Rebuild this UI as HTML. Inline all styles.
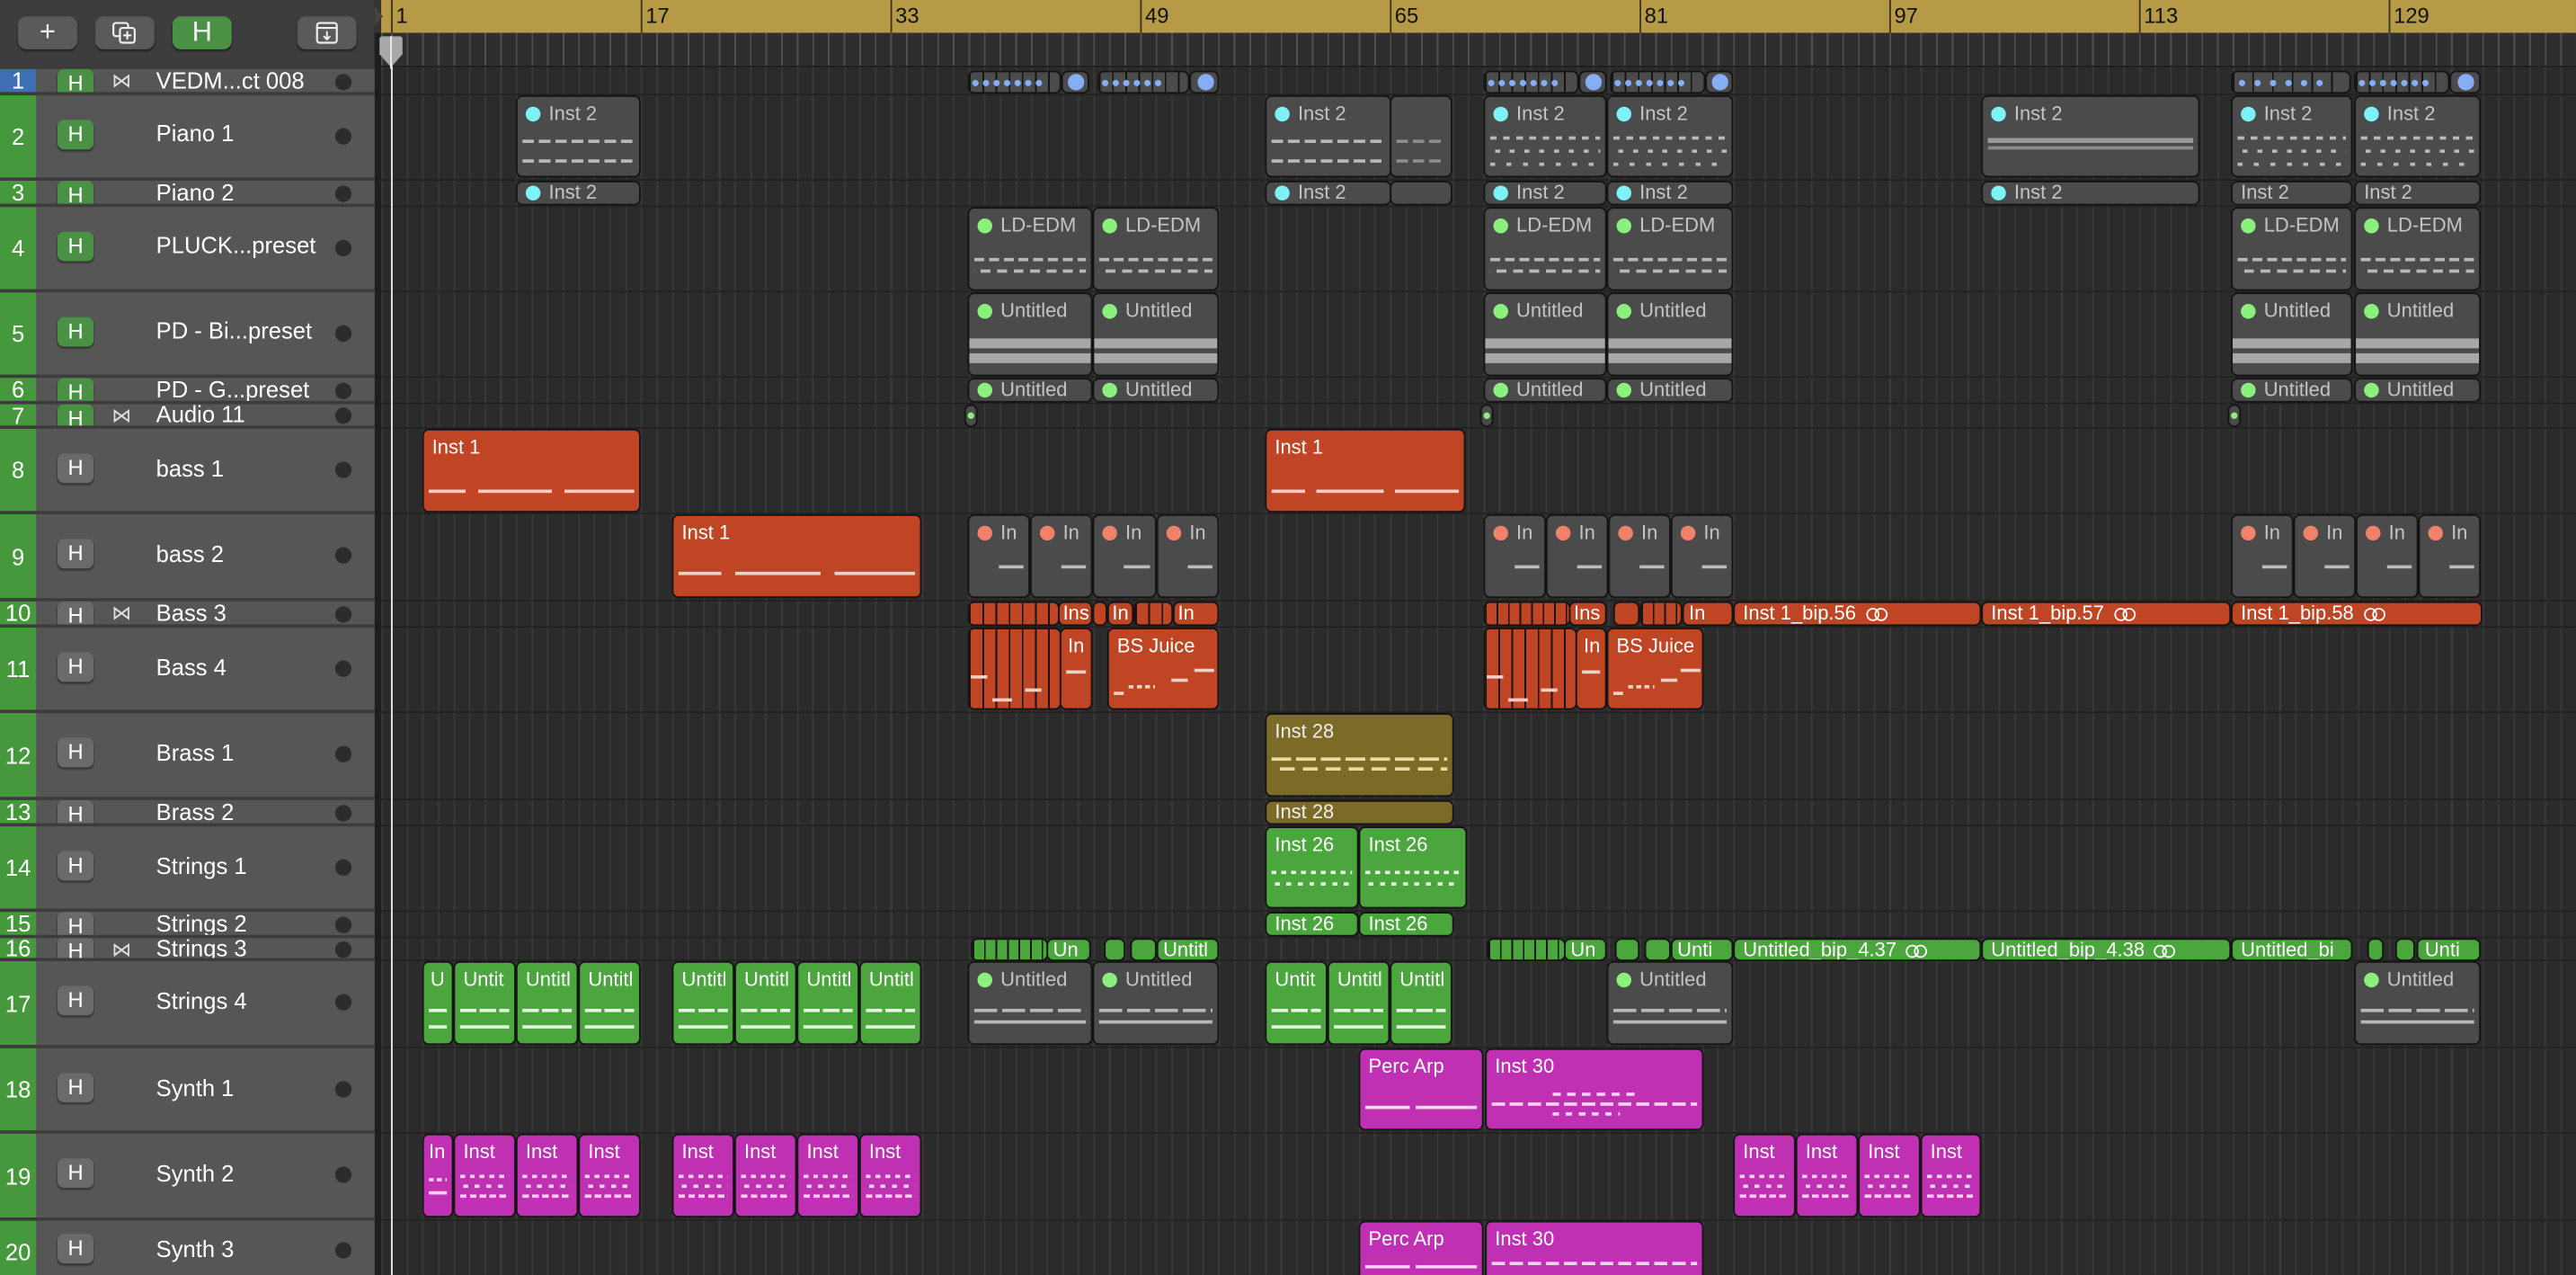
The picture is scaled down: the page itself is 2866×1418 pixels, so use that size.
<!DOCTYPE html>
<html><head><meta charset="utf-8"><style>
html,body{margin:0;padding:0;width:2866px;height:1418px;overflow:hidden;background:#2a2a2a;font-family:"Liberation Sans",sans-serif}
#s{position:absolute;left:0;top:0;width:1568px;height:776px;transform:scale(1.8278,1.8273);transform-origin:0 0;overflow:hidden;background:#2a2a2a}
.a{position:absolute}
#tb{left:0;top:0;width:228px;height:41px;background:#3d3d3d}
.btn{position:absolute;top:10px;width:36px;height:20px;border-radius:5px;background:#5a5a5a;color:#eee;font-size:17px;text-align:center;line-height:20px;box-shadow:0 1px 1px #222}
#ruler{left:232px;top:0;width:1336px;height:20px;background:#b69a45}
.bn{position:absolute;top:0;height:20px;border-left:1px solid #3b3320;font-size:13px;color:#111;padding-left:2px;line-height:19px}
#ticks{left:232px;top:20px;width:1336px;height:21px;background:#2e2e2e repeating-linear-gradient(90deg,#505050 0 1px,transparent 1px 9.5px);background-position:6px 0;border-bottom:1px solid #1e1e1e;box-sizing:border-box}
#grid{left:232px;top:41px;width:1336px;height:735px;background:#2b2b2b repeating-linear-gradient(90deg,#3a3a3a 0 1px,transparent 1px 9.5px);background-position:6px 0}
#lp{left:0;top:41px;width:228px;height:735px;background:#3a3a3a}
#gap{left:228px;top:0;width:4px;height:776px;background:#1e1e1e}
.row{position:absolute;left:0;width:228px;background:#565656;overflow:hidden;border-bottom:2px solid #3c3c3c;box-sizing:border-box}
.num{position:absolute;left:0;top:0;bottom:0;width:22px;background:#46983c;color:#fff;font-size:14px;text-align:center;display:flex;align-items:center;justify-content:center}
.h{position:absolute;left:35px;width:22px;height:18px;border-radius:4px;background:#6a6a6a;color:#fff;font-size:13px;text-align:center;line-height:18px;box-shadow:0 1px 1px #333}
.h.gr{background:#4a9146}
.ic{position:absolute;left:64px;width:20px;height:14px;color:#ddd;font-size:12px;text-align:center;line-height:14px}
.nm{position:absolute;left:95px;color:#fff;font-size:14px;white-space:nowrap}
.dt{position:absolute;left:204px;width:10px;height:10px;border-radius:50%;background:#2c2c2c}
.sep{position:absolute;left:232px;width:1336px;height:1px;background:#222}
.r{position:absolute;box-sizing:border-box;border:1px solid #141414;border-radius:4px;overflow:hidden;font-size:12px;color:#fff;padding-left:5px;padding-top:3px;line-height:15px;white-space:nowrap}
.r[style*="height:15px"],.r[style*="height:14px"]{padding-top:0}
.g{background:#4b4b4b;color:#c4c4c4}
.o{background:#bf4525}
.gn{background:#4aa63d}
.m{background:#c030b2}
.ol{background:#7c6a27;color:#eee}
.d{display:inline-block;width:9px;height:9px;border-radius:50%;margin-right:5px;vertical-align:-1px}
.cy{background:#7ef3f7}.lg{background:#8af27c}.or{background:#f0826a}.bl{background:#86aef5}
.n{position:absolute;left:3px;right:3px;height:2px}
.ng{background:repeating-linear-gradient(90deg,#b8b8b8 0 7px,transparent 7px 10px)}
.nw{background:repeating-linear-gradient(90deg,rgba(255,255,255,.85) 0 10px,transparent 10px 14px)}
.thick{background:#a8a8a8;height:6px}
.lp{display:inline-block;width:6px;height:6px;border:1px solid #fff;border-radius:50%;margin-left:6px;vertical-align:-1px}
.lp+.lp{margin-left:-3px}
.au{padding:0 !important;background:#4b4b4b repeating-linear-gradient(90deg,#141414 0 1px,transparent 1px 8px)}
.au span{position:absolute;top:-1px;left:1px;color:#86aef5;font-size:9px;letter-spacing:1px;line-height:14px}
</style></head><body><div id="s">
<div class="a" id="tb">
 <div class="btn" style="left:11px">+</div>
 <div class="btn" style="left:58px"><svg width="16" height="14" viewBox="0 0 16 14" style="margin-top:3px"><rect x="1" y="1" width="9" height="8" rx="1.5" fill="none" stroke="#eee" stroke-width="1.2"/><rect x="5" y="4" width="9" height="9" rx="1.5" fill="#5a5a5a" stroke="#eee" stroke-width="1.2"/><path d="M9.5 6v5M7 8.5h5" stroke="#eee" stroke-width="1.2"/></svg></div>
 <div class="btn" style="left:105px;background:#4a9146">H</div>
 <div class="btn" style="left:181px"><svg width="16" height="15" viewBox="0 0 16 15" style="margin-top:3px"><rect x="2" y="1" width="12" height="12" rx="1.5" fill="none" stroke="#eee" stroke-width="1.2"/><path d="M2 4h12M8 6v5M6 9l2 2 2-2" fill="none" stroke="#eee" stroke-width="1.1"/></svg></div>
</div>
<div class="a" id="gap"></div>
<div class="a" style="left:228px;top:0;width:10px;height:20px;background:#333"></div>
<div class="a" id="ruler">
 <div class="bn" style="left:6px">1</div><div class="bn" style="left:158px">17</div><div class="bn" style="left:310px">33</div><div class="bn" style="left:462px">49</div><div class="bn" style="left:614px">65</div><div class="bn" style="left:766px">81</div><div class="bn" style="left:918px">97</div><div class="bn" style="left:1070px">113</div><div class="bn" style="left:1222px">129</div>
</div>
<div class="a" id="ticks"></div>
<div class="a" id="grid"></div>
<div class="a" id="lp"></div>

<div class="sep" style="top:57px"></div><div class="sep" style="top:109px"></div><div class="sep" style="top:125px"></div><div class="sep" style="top:177px"></div><div class="sep" style="top:229px"></div><div class="sep" style="top:245px"></div><div class="sep" style="top:260px"></div><div class="sep" style="top:312px"></div><div class="sep" style="top:365px"></div><div class="sep" style="top:381px"></div><div class="sep" style="top:433px"></div><div class="sep" style="top:486px"></div><div class="sep" style="top:502px"></div><div class="sep" style="top:554px"></div><div class="sep" style="top:570px"></div><div class="sep" style="top:584px"></div><div class="sep" style="top:637px"></div><div class="sep" style="top:689px"></div><div class="sep" style="top:742px"></div>

<div class="row" style="top:42px;height:16px"><div class="num" style="background:#3e6fb3">1</div><div class="h gr" style="top:0">H</div><div class="ic" style="top:0">⋈</div><div class="nm" style="top:-1px">VEDM...ct 008</div><div class="dt" style="top:3px"></div></div>
<div class="row" style="top:58px;height:52px"><div class="num">2</div><div class="h gr" style="top:15px">H</div><div class="nm" style="top:15px">Piano 1</div><div class="dt" style="top:20px"></div></div>
<div class="row" style="top:110px;height:16px"><div class="num">3</div><div class="h gr" style="top:0">H</div><div class="nm" style="top:-1px">Piano 2</div><div class="dt" style="top:3px"></div></div>
<div class="row" style="top:126px;height:52px"><div class="num">4</div><div class="h gr" style="top:15px">H</div><div class="nm" style="top:15px">PLUCK...preset</div><div class="dt" style="top:20px"></div></div>
<div class="row" style="top:178px;height:52px"><div class="num">5</div><div class="h gr" style="top:15px">H</div><div class="nm" style="top:15px">PD - Bi...preset</div><div class="dt" style="top:20px"></div></div>
<div class="row" style="top:230px;height:16px"><div class="num">6</div><div class="h gr" style="top:0">H</div><div class="nm" style="top:-1px">PD - G...preset</div><div class="dt" style="top:3px"></div></div>
<div class="row" style="top:246px;height:15px"><div class="num">7</div><div class="h gr" style="top:0">H</div><div class="ic" style="top:0">⋈</div><div class="nm" style="top:-2px">Audio 11</div><div class="dt" style="top:2px"></div></div>
<div class="row" style="top:261px;height:52px"><div class="num">8</div><div class="h" style="top:15px">H</div><div class="nm" style="top:16px">bass 1</div><div class="dt" style="top:20px"></div></div>
<div class="row" style="top:313px;height:53px"><div class="num">9</div><div class="h" style="top:15px">H</div><div class="nm" style="top:16px">bass 2</div><div class="dt" style="top:20px"></div></div>
<div class="row" style="top:366px;height:16px"><div class="num">10</div><div class="h" style="top:0">H</div><div class="ic" style="top:0">⋈</div><div class="nm" style="top:-1px">Bass 3</div><div class="dt" style="top:3px"></div></div>
<div class="row" style="top:382px;height:52px"><div class="num">11</div><div class="h" style="top:15px">H</div><div class="nm" style="top:16px">Bass 4</div><div class="dt" style="top:20px"></div></div>
<div class="row" style="top:434px;height:53px"><div class="num">12</div><div class="h" style="top:15px">H</div><div class="nm" style="top:16px">Brass 1</div><div class="dt" style="top:20px"></div></div>
<div class="row" style="top:487px;height:16px"><div class="num">13</div><div class="h" style="top:0">H</div><div class="nm" style="top:-1px">Brass 2</div><div class="dt" style="top:3px"></div></div>
<div class="row" style="top:503px;height:52px"><div class="num">14</div><div class="h" style="top:15px">H</div><div class="nm" style="top:16px">Strings 1</div><div class="dt" style="top:20px"></div></div>
<div class="row" style="top:555px;height:16px"><div class="num">15</div><div class="h" style="top:0">H</div><div class="nm" style="top:-1px">Strings 2</div><div class="dt" style="top:3px"></div></div>
<div class="row" style="top:571px;height:14px"><div class="num">16</div><div class="h" style="top:-1px">H</div><div class="ic" style="top:0">⋈</div><div class="nm" style="top:-2px">Strings 3</div><div class="dt" style="top:2px"></div></div>
<div class="row" style="top:585px;height:53px"><div class="num">17</div><div class="h" style="top:15px">H</div><div class="nm" style="top:16px">Strings 4</div><div class="dt" style="top:20px"></div></div>
<div class="row" style="top:638px;height:52px"><div class="num">18</div><div class="h" style="top:15px">H</div><div class="nm" style="top:16px">Synth 1</div><div class="dt" style="top:20px"></div></div>
<div class="row" style="top:690px;height:53px"><div class="num">19</div><div class="h" style="top:15px">H</div><div class="nm" style="top:16px">Synth 2</div><div class="dt" style="top:20px"></div></div>
<div class="row" style="top:743px;height:40px"><div class="num">20</div><div class="h" style="top:8px">H</div><div class="nm" style="top:9px">Synth 3</div><div class="dt" style="top:13px"></div></div>

<!-- Row 1 audio cells -->
<div class="r g au" style="left:589px;top:43px;width:57px;height:14px"><span>●●●●●●●</span></div>
<div class="r g" style="left:646px;top:43px;width:17px;height:14px;padding:0"><span class="d bl" style="position:absolute;left:3px;top:1px;width:10px;height:10px"></span></div>
<div class="r g au" style="left:668px;top:43px;width:56px;height:14px"><span>●●●●●●</span></div>
<div class="r g" style="left:724px;top:43px;width:18px;height:14px;padding:0"><span class="d bl" style="position:absolute;left:4px;top:1px;width:10px;height:10px"></span></div>
<div class="r g au" style="left:903px;top:43px;width:58px;height:14px"><span>●●●●●●●</span></div>
<div class="r g" style="left:961px;top:43px;width:17px;height:14px;padding:0"><span class="d bl" style="position:absolute;left:3px;top:1px;width:10px;height:10px"></span></div>
<div class="r g au" style="left:980px;top:43px;width:58px;height:14px"><span>●●●●●●●</span></div>
<div class="r g" style="left:1038px;top:43px;width:17px;height:14px;padding:0"><span class="d bl" style="position:absolute;left:3px;top:1px;width:10px;height:10px"></span></div>
<div class="r g au" style="left:1358px;top:43px;width:73px;height:14px;background:#4b4b4b repeating-linear-gradient(90deg,#141414 0 1px,transparent 1px 12px)"><span style="letter-spacing:4px;left:3px">●●●●●●</span></div>
<div class="r g au" style="left:1433px;top:43px;width:58px;height:14px"><span>●●●●●●●</span></div>
<div class="r g" style="left:1491px;top:43px;width:19px;height:14px;padding:0"><span class="d bl" style="position:absolute;left:4px;top:1px;width:10px;height:10px"></span></div>

<!-- Row 2 Inst 2 -->
<div class="r g" style="left:314px;top:58px;width:76px;height:50px"><span class="d cy"></span>Inst 2<div class="n ng" style="top:26px"></div><div class="n ng" style="top:38px"></div></div>
<div class="r g" style="left:770px;top:58px;width:77px;height:50px"><span class="d cy"></span>Inst 2<div class="n ng" style="top:26px"></div><div class="n ng" style="top:38px"></div></div>
<div class="r g" style="left:846px;top:58px;width:38px;height:50px"><div class="n ng" style="top:26px;opacity:.6"></div><div class="n ng" style="top:38px;opacity:.6"></div></div>
<div class="r g" style="left:903px;top:58px;width:75px;height:50px"><span class="d cy"></span>Inst 2<div class="n ng" style="top:24px;background:repeating-linear-gradient(90deg,#b8b8b8 0 4px,transparent 4px 8px)"></div><div class="n ng" style="top:32px;background:repeating-linear-gradient(90deg,transparent 0 3px,#b8b8b8 3px 6px,transparent 6px 9px)"></div><div class="n ng" style="top:40px;background:repeating-linear-gradient(90deg,#b8b8b8 0 3px,transparent 3px 10px)"></div></div>
<div class="r g" style="left:978px;top:58px;width:77px;height:50px"><span class="d cy"></span>Inst 2<div class="n ng" style="top:24px;background:repeating-linear-gradient(90deg,#b8b8b8 0 4px,transparent 4px 8px)"></div><div class="n ng" style="top:32px;background:repeating-linear-gradient(90deg,transparent 0 3px,#b8b8b8 3px 6px,transparent 6px 9px)"></div><div class="n ng" style="top:40px;background:repeating-linear-gradient(90deg,#b8b8b8 0 3px,transparent 3px 10px)"></div></div>
<div class="r g" style="left:1206px;top:58px;width:133px;height:50px"><span class="d cy"></span>Inst 2<div class="n" style="top:25px;background:#9a9a9a;height:3px"></div><div class="n" style="top:30px;background:#8a8a8a;height:2px"></div></div>
<div class="r g" style="left:1358px;top:58px;width:74px;height:50px"><span class="d cy"></span>Inst 2<div class="n ng" style="top:24px;background:repeating-linear-gradient(90deg,#b8b8b8 0 4px,transparent 4px 8px)"></div><div class="n ng" style="top:32px;background:repeating-linear-gradient(90deg,transparent 0 3px,#b8b8b8 3px 6px,transparent 6px 9px)"></div><div class="n ng" style="top:40px;background:repeating-linear-gradient(90deg,#b8b8b8 0 3px,transparent 3px 10px)"></div></div>
<div class="r g" style="left:1433px;top:58px;width:77px;height:50px"><span class="d cy"></span>Inst 2<div class="n ng" style="top:24px;background:repeating-linear-gradient(90deg,#b8b8b8 0 4px,transparent 4px 8px)"></div><div class="n ng" style="top:32px;background:repeating-linear-gradient(90deg,transparent 0 3px,#b8b8b8 3px 6px,transparent 6px 9px)"></div><div class="n ng" style="top:40px;background:repeating-linear-gradient(90deg,#b8b8b8 0 3px,transparent 3px 10px)"></div></div>

<!-- Row 3 -->
<div class="r g" style="left:314px;top:110px;width:76px;height:15px;line-height:13px"><span class="d cy"></span>Inst 2</div>
<div class="r g" style="left:770px;top:110px;width:77px;height:15px;line-height:13px"><span class="d cy"></span>Inst 2</div>
<div class="r g" style="left:846px;top:110px;width:38px;height:15px"></div>
<div class="r g" style="left:903px;top:110px;width:75px;height:15px;line-height:13px"><span class="d cy"></span>Inst 2</div>
<div class="r g" style="left:978px;top:110px;width:77px;height:15px;line-height:13px"><span class="d cy"></span>Inst 2</div>
<div class="r g" style="left:1206px;top:110px;width:133px;height:15px;line-height:13px"><span class="d cy"></span>Inst 2</div>
<div class="r g" style="left:1358px;top:110px;width:74px;height:15px;line-height:13px">Inst 2</div>
<div class="r g" style="left:1433px;top:110px;width:77px;height:15px;line-height:13px">Inst 2</div>

<!-- Row 4 LD-EDM -->
<div class="r g" style="left:589px;top:126px;width:76px;height:51px"><span class="d lg"></span>LD-EDM<div class="n ng" style="top:30px;background:repeating-linear-gradient(90deg,#b8b8b8 0 6px,transparent 6px 9px)"></div><div class="n ng" style="top:37px;background:repeating-linear-gradient(90deg,transparent 0 4px,#b8b8b8 4px 10px)"></div></div>
<div class="r g" style="left:665px;top:126px;width:77px;height:51px"><span class="d lg"></span>LD-EDM<div class="n ng" style="top:30px;background:repeating-linear-gradient(90deg,#b8b8b8 0 6px,transparent 6px 9px)"></div><div class="n ng" style="top:37px;background:repeating-linear-gradient(90deg,transparent 0 4px,#b8b8b8 4px 10px)"></div></div>
<div class="r g" style="left:903px;top:126px;width:75px;height:51px"><span class="d lg"></span>LD-EDM<div class="n ng" style="top:30px;background:repeating-linear-gradient(90deg,#b8b8b8 0 6px,transparent 6px 9px)"></div><div class="n ng" style="top:37px;background:repeating-linear-gradient(90deg,transparent 0 4px,#b8b8b8 4px 10px)"></div></div>
<div class="r g" style="left:978px;top:126px;width:77px;height:51px"><span class="d lg"></span>LD-EDM<div class="n ng" style="top:30px;background:repeating-linear-gradient(90deg,#b8b8b8 0 6px,transparent 6px 9px)"></div><div class="n ng" style="top:37px;background:repeating-linear-gradient(90deg,transparent 0 4px,#b8b8b8 4px 10px)"></div></div>
<div class="r g" style="left:1358px;top:126px;width:74px;height:51px"><span class="d lg"></span>LD-EDM<div class="n ng" style="top:30px;background:repeating-linear-gradient(90deg,#b8b8b8 0 6px,transparent 6px 9px)"></div><div class="n ng" style="top:37px;background:repeating-linear-gradient(90deg,transparent 0 4px,#b8b8b8 4px 10px)"></div></div>
<div class="r g" style="left:1433px;top:126px;width:77px;height:51px"><span class="d lg"></span>LD-EDM<div class="n ng" style="top:30px;background:repeating-linear-gradient(90deg,#b8b8b8 0 6px,transparent 6px 9px)"></div><div class="n ng" style="top:37px;background:repeating-linear-gradient(90deg,transparent 0 4px,#b8b8b8 4px 10px)"></div></div>

<!-- Row 5 -->
<div class="r g" style="left:589px;top:178px;width:76px;height:51px"><span class="d lg"></span>Untitled<div class="n thick" style="top:27px;left:0;right:0"></div><div class="n thick" style="top:36px;left:0;right:0"></div></div>
<div class="r g" style="left:665px;top:178px;width:77px;height:51px"><span class="d lg"></span>Untitled<div class="n thick" style="top:27px;left:0;right:0"></div><div class="n thick" style="top:36px;left:0;right:0"></div></div>
<div class="r g" style="left:903px;top:178px;width:75px;height:51px"><span class="d lg"></span>Untitled<div class="n thick" style="top:27px;left:0;right:0"></div><div class="n thick" style="top:36px;left:0;right:0"></div></div>
<div class="r g" style="left:978px;top:178px;width:77px;height:51px"><span class="d lg"></span>Untitled<div class="n thick" style="top:27px;left:0;right:0"></div><div class="n thick" style="top:36px;left:0;right:0"></div></div>
<div class="r g" style="left:1358px;top:178px;width:74px;height:51px"><span class="d lg"></span>Untitled<div class="n thick" style="top:27px;left:0;right:0"></div><div class="n thick" style="top:36px;left:0;right:0"></div></div>
<div class="r g" style="left:1433px;top:178px;width:77px;height:51px"><span class="d lg"></span>Untitled<div class="n thick" style="top:27px;left:0;right:0"></div><div class="n thick" style="top:36px;left:0;right:0"></div></div>

<!-- Row 6 -->
<div class="r g" style="left:589px;top:230px;width:76px;height:15px;line-height:13px"><span class="d lg"></span>Untitled</div>
<div class="r g" style="left:665px;top:230px;width:77px;height:15px;line-height:13px"><span class="d lg"></span>Untitled</div>
<div class="r g" style="left:903px;top:230px;width:75px;height:15px;line-height:13px"><span class="d lg"></span>Untitled</div>
<div class="r g" style="left:978px;top:230px;width:77px;height:15px;line-height:13px"><span class="d lg"></span>Untitled</div>
<div class="r g" style="left:1358px;top:230px;width:74px;height:15px;line-height:13px"><span class="d lg"></span>Untitled</div>
<div class="r g" style="left:1433px;top:230px;width:77px;height:15px;line-height:13px"><span class="d lg"></span>Untitled</div>

<!-- Row 7 -->
<div class="r g" style="left:587px;top:246px;width:8px;height:14px;padding:0"><span class="d lg" style="width:4px;height:4px;margin:4px 0 0 1px;display:block"></span></div>
<div class="r g" style="left:901px;top:246px;width:8px;height:14px;padding:0"><span class="d lg" style="width:4px;height:4px;margin:4px 0 0 1px;display:block"></span></div>
<div class="r g" style="left:1356px;top:246px;width:8px;height:14px;padding:0"><span class="d lg" style="width:4px;height:4px;margin:4px 0 0 1px;display:block"></span></div>

<!-- Row 8 -->
<div class="r o" style="left:257px;top:261px;width:133px;height:51px">Inst 1<div class="n nw" style="top:36px;background:linear-gradient(90deg,#f3d0c6 0 18%,transparent 18% 24%,#f3d0c6 24% 60%,transparent 60% 66%,#f3d0c6 66% 100%)"></div></div>
<div class="r o" style="left:770px;top:261px;width:122px;height:51px">Inst 1<div class="n nw" style="top:36px;background:linear-gradient(90deg,#f3d0c6 0 18%,transparent 18% 24%,#f3d0c6 24% 60%,transparent 60% 66%,#f3d0c6 66% 100%)"></div></div>

<!-- Row 9 -->
<div class="r o" style="left:409px;top:313px;width:152px;height:51px">Inst 1<div class="n" style="top:34px;background:linear-gradient(90deg,#f3d0c6 0 18%,transparent 18% 24%,#f3d0c6 24% 60%,transparent 60% 66%,#f3d0c6 66% 100%)"></div></div>
<div class="r g" style="left:589px;top:313px;width:38px;height:51px"><span class="d or"></span>In<div class="n" style="top:30px;background:#bbb;left:18px"></div></div>
<div class="r g" style="left:627px;top:313px;width:38px;height:51px"><span class="d or"></span>In<div class="n" style="top:30px;background:#bbb;left:18px"></div></div>
<div class="r g" style="left:665px;top:313px;width:39px;height:51px"><span class="d or"></span>In<div class="n" style="top:30px;background:#bbb;left:18px"></div></div>
<div class="r g" style="left:704px;top:313px;width:38px;height:51px"><span class="d or"></span>In<div class="n" style="top:30px;background:#bbb;left:18px"></div></div>
<div class="r g" style="left:903px;top:313px;width:38px;height:51px"><span class="d or"></span>In<div class="n" style="top:30px;background:#bbb;left:18px"></div></div>
<div class="r g" style="left:941px;top:313px;width:38px;height:51px"><span class="d or"></span>In<div class="n" style="top:30px;background:#bbb;left:18px"></div></div>
<div class="r g" style="left:979px;top:313px;width:38px;height:51px"><span class="d or"></span>In<div class="n" style="top:30px;background:#bbb;left:18px"></div></div>
<div class="r g" style="left:1017px;top:313px;width:38px;height:51px"><span class="d or"></span>In<div class="n" style="top:30px;background:#bbb;left:18px"></div></div>
<div class="r g" style="left:1358px;top:313px;width:38px;height:51px"><span class="d or"></span>In<div class="n" style="top:30px;background:#bbb;left:18px"></div></div>
<div class="r g" style="left:1396px;top:313px;width:38px;height:51px"><span class="d or"></span>In<div class="n" style="top:30px;background:#bbb;left:18px"></div></div>
<div class="r g" style="left:1434px;top:313px;width:38px;height:51px"><span class="d or"></span>In<div class="n" style="top:30px;background:#bbb;left:18px"></div></div>
<div class="r g" style="left:1472px;top:313px;width:38px;height:51px"><span class="d or"></span>In<div class="n" style="top:30px;background:#bbb;left:18px"></div></div>

<!-- Row 10 -->
<div class="r o" style="left:589px;top:366px;width:56px;height:15px;padding:0;background:#bf4525 repeating-linear-gradient(90deg,#141414 0 1px,transparent 1px 8px)"></div>
<div class="r o" style="left:644px;top:366px;width:21px;height:15px;line-height:13px;padding-left:2px">Ins</div>
<div class="r o" style="left:665px;top:366px;width:9px;height:15px"></div>
<div class="r o" style="left:674px;top:366px;width:16px;height:15px;line-height:13px;padding-left:2px">In</div>
<div class="r o" style="left:690px;top:366px;width:24px;height:15px;padding:0;background:#bf4525 repeating-linear-gradient(90deg,#141414 0 1px,transparent 1px 8px)"></div>
<div class="r o" style="left:714px;top:366px;width:28px;height:15px;line-height:13px;padding-left:2px">In</div>
<div class="r o" style="left:903px;top:366px;width:53px;height:15px;padding:0;background:#bf4525 repeating-linear-gradient(90deg,#141414 0 1px,transparent 1px 7px)"></div>
<div class="r o" style="left:955px;top:366px;width:23px;height:15px;line-height:13px;padding-left:2px">Ins</div>
<div class="r o" style="left:982px;top:366px;width:16px;height:15px"></div>
<div class="r o" style="left:998px;top:366px;width:26px;height:15px;padding:0;background:#bf4525 repeating-linear-gradient(90deg,#141414 0 1px,transparent 1px 7px)"></div>
<div class="r o" style="left:1024px;top:366px;width:31px;height:15px;line-height:13px;padding-left:3px">In</div>
<div class="r o" style="left:1055px;top:366px;width:151px;height:15px;line-height:13px">Inst 1_bip.56<span class="lp"></span><span class="lp"></span></div>
<div class="r o" style="left:1206px;top:366px;width:152px;height:15px;line-height:13px">Inst 1_bip.57<span class="lp"></span><span class="lp"></span></div>
<div class="r o" style="left:1358px;top:366px;width:153px;height:15px;line-height:13px">Inst 1_bip.58<span class="lp"></span><span class="lp"></span></div>

<!-- Row 11 -->
<div class="r o" style="left:589px;top:382px;width:57px;height:50px;padding:0;background:#bf4525 repeating-linear-gradient(90deg,#141414 0 1px,transparent 1px 8px)"><div class="n" style="top:28px;left:1px;width:10px;background:#f3d0c6"></div><div class="n" style="top:42px;left:14px;width:12px;background:#f3d0c6"></div><div class="n" style="top:36px;left:34px;width:10px;background:#f3d0c6"></div></div>
<div class="r o" style="left:645px;top:382px;width:20px;height:50px;padding-left:4px">In<div class="n" style="top:25px;background:#f3d0c6"></div></div>
<div class="r o" style="left:674px;top:382px;width:68px;height:50px">BS Juice<div class="n" style="top:24px;left:52px;width:12px;background:#f3d0c6"></div><div class="n" style="top:30px;left:38px;width:10px;background:#f3d0c6"></div><div class="n" style="top:34px;left:12px;width:16px;background:repeating-linear-gradient(90deg,#f3d0c6 0 3px,transparent 3px 5px)"></div><div class="n" style="top:38px;left:3px;width:6px;background:#f3d0c6"></div></div>
<div class="r o" style="left:903px;top:382px;width:57px;height:50px;padding:0;background:#bf4525 repeating-linear-gradient(90deg,#141414 0 1px,transparent 1px 8px)"><div class="n" style="top:28px;left:1px;width:10px;background:#f3d0c6"></div><div class="n" style="top:42px;left:14px;width:12px;background:#f3d0c6"></div><div class="n" style="top:36px;left:34px;width:10px;background:#f3d0c6"></div></div>
<div class="r o" style="left:959px;top:382px;width:19px;height:50px;padding-left:4px">In<div class="n" style="top:25px;background:#f3d0c6"></div></div>
<div class="r o" style="left:978px;top:382px;width:59px;height:50px">BS Juice<div class="n" style="top:24px;left:44px;width:12px;background:#f3d0c6"></div><div class="n" style="top:30px;left:32px;width:10px;background:#f3d0c6"></div><div class="n" style="top:34px;left:12px;width:16px;background:repeating-linear-gradient(90deg,#f3d0c6 0 3px,transparent 3px 5px)"></div><div class="n" style="top:38px;left:3px;width:6px;background:#f3d0c6"></div></div>

<!-- Row 12/13 -->
<div class="r ol" style="left:770px;top:434px;width:115px;height:51px">Inst 28<div class="n" style="top:26px;background:repeating-linear-gradient(90deg,#e8dca0 0 12px,transparent 12px 15px)"></div><div class="n" style="top:32px;background:repeating-linear-gradient(90deg,transparent 0 5px,#e8dca0 5px 14px)"></div></div>
<div class="r ol" style="left:770px;top:487px;width:115px;height:15px;line-height:13px">Inst 28</div>

<!-- Row 14/15 -->
<div class="r gn" style="left:770px;top:503px;width:57px;height:50px">Inst 26<div class="n" style="top:26px;background:repeating-linear-gradient(90deg,#e4f7df 0 3px,transparent 3px 6px)"></div><div class="n" style="top:33px;background:repeating-linear-gradient(90deg,transparent 0 2px,#e4f7df 2px 5px,transparent 5px 7px)"></div></div>
<div class="r gn" style="left:827px;top:503px;width:66px;height:50px">Inst 26<div class="n" style="top:26px;background:repeating-linear-gradient(90deg,#e4f7df 0 3px,transparent 3px 6px)"></div><div class="n" style="top:33px;background:repeating-linear-gradient(90deg,transparent 0 2px,#e4f7df 2px 5px,transparent 5px 7px)"></div></div>
<div class="r gn" style="left:770px;top:555px;width:57px;height:15px;line-height:13px">Inst 26</div>
<div class="r gn" style="left:827px;top:555px;width:58px;height:15px;line-height:13px">Inst 26</div>

<!-- Row 16 -->
<div class="r gn" style="left:591px;top:571px;width:47px;height:14px;padding:0;background:#4aa63d repeating-linear-gradient(90deg,#141414 0 1px,transparent 1px 7px)"></div>
<div class="r gn" style="left:637px;top:571px;width:27px;height:14px;line-height:12px;padding-left:3px">Un</div>
<div class="r gn" style="left:672px;top:571px;width:13px;height:14px"></div>
<div class="r gn" style="left:688px;top:571px;width:16px;height:14px"></div>
<div class="r gn" style="left:704px;top:571px;width:38px;height:14px;line-height:12px;padding-left:3px">Untitl</div>
<div class="r gn" style="left:905px;top:571px;width:48px;height:14px;padding:0;background:#4aa63d repeating-linear-gradient(90deg,#141414 0 1px,transparent 1px 7px)"></div>
<div class="r gn" style="left:952px;top:571px;width:26px;height:14px;line-height:12px;padding-left:3px">Un</div>
<div class="r gn" style="left:983px;top:571px;width:15px;height:14px"></div>
<div class="r gn" style="left:1001px;top:571px;width:16px;height:14px"></div>
<div class="r gn" style="left:1017px;top:571px;width:38px;height:14px;line-height:12px;padding-left:3px">Unti</div>
<div class="r gn" style="left:1055px;top:571px;width:151px;height:14px;line-height:12px">Untitled_bip_4.37<span class="lp"></span><span class="lp"></span></div>
<div class="r gn" style="left:1206px;top:571px;width:152px;height:14px;line-height:12px">Untitled_bip_4.38<span class="lp"></span><span class="lp"></span></div>
<div class="r gn" style="left:1358px;top:571px;width:74px;height:14px;line-height:12px">Untitled_bi</div>
<div class="r gn" style="left:1441px;top:571px;width:10px;height:14px"></div>
<div class="r gn" style="left:1458px;top:571px;width:12px;height:14px"></div>
<div class="r gn" style="left:1471px;top:571px;width:39px;height:14px;line-height:12px;padding-left:4px">Unti</div>

<!-- Row 17 -->
<div class="r gn" style="left:257px;top:585px;width:19px;height:51px;padding-left:4px">U<div class="n" style="top:28px;background:#e4f7df"></div><div class="n" style="top:38px;background:#e4f7df"></div></div>
<div class="r gn" style="left:276px;top:585px;width:38px;height:51px">Untit<div class="n" style="top:28px;background:repeating-linear-gradient(90deg,#e4f7df 0 10px,transparent 10px 12px)"></div><div class="n" style="top:38px;background:#e4f7df"></div></div>
<div class="r gn" style="left:314px;top:585px;width:38px;height:51px">Untitl<div class="n" style="top:28px;background:repeating-linear-gradient(90deg,#e4f7df 0 10px,transparent 10px 12px)"></div><div class="n" style="top:38px;background:#e4f7df"></div></div>
<div class="r gn" style="left:352px;top:585px;width:38px;height:51px">Untitl<div class="n" style="top:28px;background:repeating-linear-gradient(90deg,#e4f7df 0 10px,transparent 10px 12px)"></div><div class="n" style="top:38px;background:#e4f7df"></div></div>
<div class="r gn" style="left:409px;top:585px;width:38px;height:51px">Untitl<div class="n" style="top:28px;background:repeating-linear-gradient(90deg,#e4f7df 0 10px,transparent 10px 12px)"></div><div class="n" style="top:38px;background:#e4f7df"></div></div>
<div class="r gn" style="left:447px;top:585px;width:38px;height:51px">Untitl<div class="n" style="top:28px;background:repeating-linear-gradient(90deg,#e4f7df 0 10px,transparent 10px 12px)"></div><div class="n" style="top:38px;background:#e4f7df"></div></div>
<div class="r gn" style="left:485px;top:585px;width:38px;height:51px">Untitl<div class="n" style="top:28px;background:repeating-linear-gradient(90deg,#e4f7df 0 10px,transparent 10px 12px)"></div><div class="n" style="top:38px;background:#e4f7df"></div></div>
<div class="r gn" style="left:523px;top:585px;width:38px;height:51px">Untitl<div class="n" style="top:28px;background:repeating-linear-gradient(90deg,#e4f7df 0 10px,transparent 10px 12px)"></div><div class="n" style="top:38px;background:#e4f7df"></div></div>
<div class="r g" style="left:589px;top:585px;width:76px;height:51px"><span class="d lg"></span>Untitled<div class="n" style="top:28px;background:repeating-linear-gradient(90deg,#b8b8b8 0 14px,transparent 14px 17px)"></div><div class="n" style="top:35px;background:#b8b8b8"></div></div>
<div class="r g" style="left:665px;top:585px;width:77px;height:51px"><span class="d lg"></span>Untitled<div class="n" style="top:28px;background:repeating-linear-gradient(90deg,#b8b8b8 0 14px,transparent 14px 17px)"></div><div class="n" style="top:35px;background:#b8b8b8"></div></div>
<div class="r gn" style="left:770px;top:585px;width:38px;height:51px">Untit<div class="n" style="top:28px;background:repeating-linear-gradient(90deg,#e4f7df 0 10px,transparent 10px 12px)"></div><div class="n" style="top:38px;background:#e4f7df"></div></div>
<div class="r gn" style="left:808px;top:585px;width:38px;height:51px">Untitl<div class="n" style="top:28px;background:repeating-linear-gradient(90deg,#e4f7df 0 10px,transparent 10px 12px)"></div><div class="n" style="top:38px;background:#e4f7df"></div></div>
<div class="r gn" style="left:846px;top:585px;width:38px;height:51px">Untitl<div class="n" style="top:28px;background:repeating-linear-gradient(90deg,#e4f7df 0 10px,transparent 10px 12px)"></div><div class="n" style="top:38px;background:#e4f7df"></div></div>
<div class="r g" style="left:978px;top:585px;width:77px;height:51px"><span class="d lg"></span>Untitled<div class="n" style="top:28px;background:repeating-linear-gradient(90deg,#b8b8b8 0 14px,transparent 14px 17px)"></div><div class="n" style="top:35px;background:#b8b8b8"></div></div>
<div class="r g" style="left:1433px;top:585px;width:77px;height:51px"><span class="d lg"></span>Untitled<div class="n" style="top:28px;background:repeating-linear-gradient(90deg,#b8b8b8 0 14px,transparent 14px 17px)"></div><div class="n" style="top:35px;background:#b8b8b8"></div></div>

<!-- Row 18 -->
<div class="r m" style="left:827px;top:638px;width:76px;height:50px">Perc Arp<div class="n" style="top:34px;background:linear-gradient(90deg,#f6d4f1 0 40%,transparent 40% 45%,#f6d4f1 45% 100%)"></div></div>
<div class="r m" style="left:904px;top:638px;width:133px;height:50px">Inst 30<div class="n" style="top:26px;left:40px;right:40px;background:repeating-linear-gradient(90deg,#f6d4f1 0 5px,transparent 5px 9px)"></div><div class="n" style="top:32px;background:repeating-linear-gradient(90deg,#f6d4f1 0 8px,transparent 8px 11px)"></div><div class="n" style="top:38px;left:40px;right:50px;background:repeating-linear-gradient(90deg,#f6d4f1 0 4px,transparent 4px 8px)"></div></div>

<!-- Row 19 -->
<div class="r m" style="left:257px;top:690px;width:19px;height:51px;padding-left:3px">In<div class="n" style="top:26px;background:repeating-linear-gradient(90deg,#f6d4f1 0 3px,transparent 3px 5px)"></div><div class="n" style="top:34px;background:#f6d4f1"></div></div>
<div class="r m" style="left:276px;top:690px;width:38px;height:51px">Inst<div class="n" style="top:24px;background:repeating-linear-gradient(90deg,#f6d4f1 0 3px,transparent 3px 6px)"></div><div class="n" style="top:30px;background:repeating-linear-gradient(90deg,transparent 0 2px,#f6d4f1 2px 5px,transparent 5px 7px)"></div><div class="n" style="top:36px;background:repeating-linear-gradient(90deg,#f6d4f1 0 4px,transparent 4px 6px)"></div></div>
<div class="r m" style="left:314px;top:690px;width:38px;height:51px">Inst<div class="n" style="top:24px;background:repeating-linear-gradient(90deg,#f6d4f1 0 3px,transparent 3px 6px)"></div><div class="n" style="top:30px;background:repeating-linear-gradient(90deg,transparent 0 2px,#f6d4f1 2px 5px,transparent 5px 7px)"></div><div class="n" style="top:36px;background:repeating-linear-gradient(90deg,#f6d4f1 0 4px,transparent 4px 6px)"></div></div>
<div class="r m" style="left:352px;top:690px;width:38px;height:51px">Inst<div class="n" style="top:24px;background:repeating-linear-gradient(90deg,#f6d4f1 0 3px,transparent 3px 6px)"></div><div class="n" style="top:30px;background:repeating-linear-gradient(90deg,transparent 0 2px,#f6d4f1 2px 5px,transparent 5px 7px)"></div><div class="n" style="top:36px;background:repeating-linear-gradient(90deg,#f6d4f1 0 4px,transparent 4px 6px)"></div></div>
<div class="r m" style="left:409px;top:690px;width:38px;height:51px">Inst<div class="n" style="top:24px;background:repeating-linear-gradient(90deg,#f6d4f1 0 3px,transparent 3px 6px)"></div><div class="n" style="top:30px;background:repeating-linear-gradient(90deg,transparent 0 2px,#f6d4f1 2px 5px,transparent 5px 7px)"></div><div class="n" style="top:36px;background:repeating-linear-gradient(90deg,#f6d4f1 0 4px,transparent 4px 6px)"></div></div>
<div class="r m" style="left:447px;top:690px;width:38px;height:51px">Inst<div class="n" style="top:24px;background:repeating-linear-gradient(90deg,#f6d4f1 0 3px,transparent 3px 6px)"></div><div class="n" style="top:30px;background:repeating-linear-gradient(90deg,transparent 0 2px,#f6d4f1 2px 5px,transparent 5px 7px)"></div><div class="n" style="top:36px;background:repeating-linear-gradient(90deg,#f6d4f1 0 4px,transparent 4px 6px)"></div></div>
<div class="r m" style="left:485px;top:690px;width:38px;height:51px">Inst<div class="n" style="top:24px;background:repeating-linear-gradient(90deg,#f6d4f1 0 3px,transparent 3px 6px)"></div><div class="n" style="top:30px;background:repeating-linear-gradient(90deg,transparent 0 2px,#f6d4f1 2px 5px,transparent 5px 7px)"></div><div class="n" style="top:36px;background:repeating-linear-gradient(90deg,#f6d4f1 0 4px,transparent 4px 6px)"></div></div>
<div class="r m" style="left:523px;top:690px;width:38px;height:51px">Inst<div class="n" style="top:24px;background:repeating-linear-gradient(90deg,#f6d4f1 0 3px,transparent 3px 6px)"></div><div class="n" style="top:30px;background:repeating-linear-gradient(90deg,transparent 0 2px,#f6d4f1 2px 5px,transparent 5px 7px)"></div><div class="n" style="top:36px;background:repeating-linear-gradient(90deg,#f6d4f1 0 4px,transparent 4px 6px)"></div></div>
<div class="r m" style="left:1055px;top:690px;width:38px;height:51px">Inst<div class="n" style="top:24px;background:repeating-linear-gradient(90deg,#f6d4f1 0 3px,transparent 3px 6px)"></div><div class="n" style="top:30px;background:repeating-linear-gradient(90deg,transparent 0 2px,#f6d4f1 2px 5px,transparent 5px 7px)"></div><div class="n" style="top:36px;background:repeating-linear-gradient(90deg,#f6d4f1 0 4px,transparent 4px 6px)"></div></div>
<div class="r m" style="left:1093px;top:690px;width:38px;height:51px">Inst<div class="n" style="top:24px;background:repeating-linear-gradient(90deg,#f6d4f1 0 3px,transparent 3px 6px)"></div><div class="n" style="top:30px;background:repeating-linear-gradient(90deg,transparent 0 2px,#f6d4f1 2px 5px,transparent 5px 7px)"></div><div class="n" style="top:36px;background:repeating-linear-gradient(90deg,#f6d4f1 0 4px,transparent 4px 6px)"></div></div>
<div class="r m" style="left:1131px;top:690px;width:38px;height:51px">Inst<div class="n" style="top:24px;background:repeating-linear-gradient(90deg,#f6d4f1 0 3px,transparent 3px 6px)"></div><div class="n" style="top:30px;background:repeating-linear-gradient(90deg,transparent 0 2px,#f6d4f1 2px 5px,transparent 5px 7px)"></div><div class="n" style="top:36px;background:repeating-linear-gradient(90deg,#f6d4f1 0 4px,transparent 4px 6px)"></div></div>
<div class="r m" style="left:1169px;top:690px;width:37px;height:51px">Inst<div class="n" style="top:24px;background:repeating-linear-gradient(90deg,#f6d4f1 0 3px,transparent 3px 6px)"></div><div class="n" style="top:30px;background:repeating-linear-gradient(90deg,transparent 0 2px,#f6d4f1 2px 5px,transparent 5px 7px)"></div><div class="n" style="top:36px;background:repeating-linear-gradient(90deg,#f6d4f1 0 4px,transparent 4px 6px)"></div></div>

<!-- Row 20 -->
<div class="r m" style="left:827px;top:743px;width:76px;height:40px">Perc Arp<div class="n" style="top:26px;background:linear-gradient(90deg,#f6d4f1 0 40%,transparent 40% 45%,#f6d4f1 45% 100%)"></div></div>
<div class="r m" style="left:904px;top:743px;width:133px;height:40px">Inst 30<div class="n" style="top:24px;background:repeating-linear-gradient(90deg,#f6d4f1 0 8px,transparent 8px 11px)"></div></div>

<div class="a" style="left:238px;top:22px;width:1px;height:754px;background:#eee"></div>
<svg class="a" style="left:229px;top:22px" width="18" height="20" viewBox="0 0 18 20"><path d="M2 2 Q2 0 4 0 H14 Q16 0 16 2 V11 L9 19 L2 11 Z" fill="#a8a8a8"/><rect x="8.5" y="0" width="1" height="20" fill="#eee"/></svg>
<svg class="a" style="left:228px;top:2px" width="6" height="16" viewBox="0 0 6 16"><path d="M0 2 L5 8 L0 14Z" fill="#444"/></svg>
</div></body></html>
